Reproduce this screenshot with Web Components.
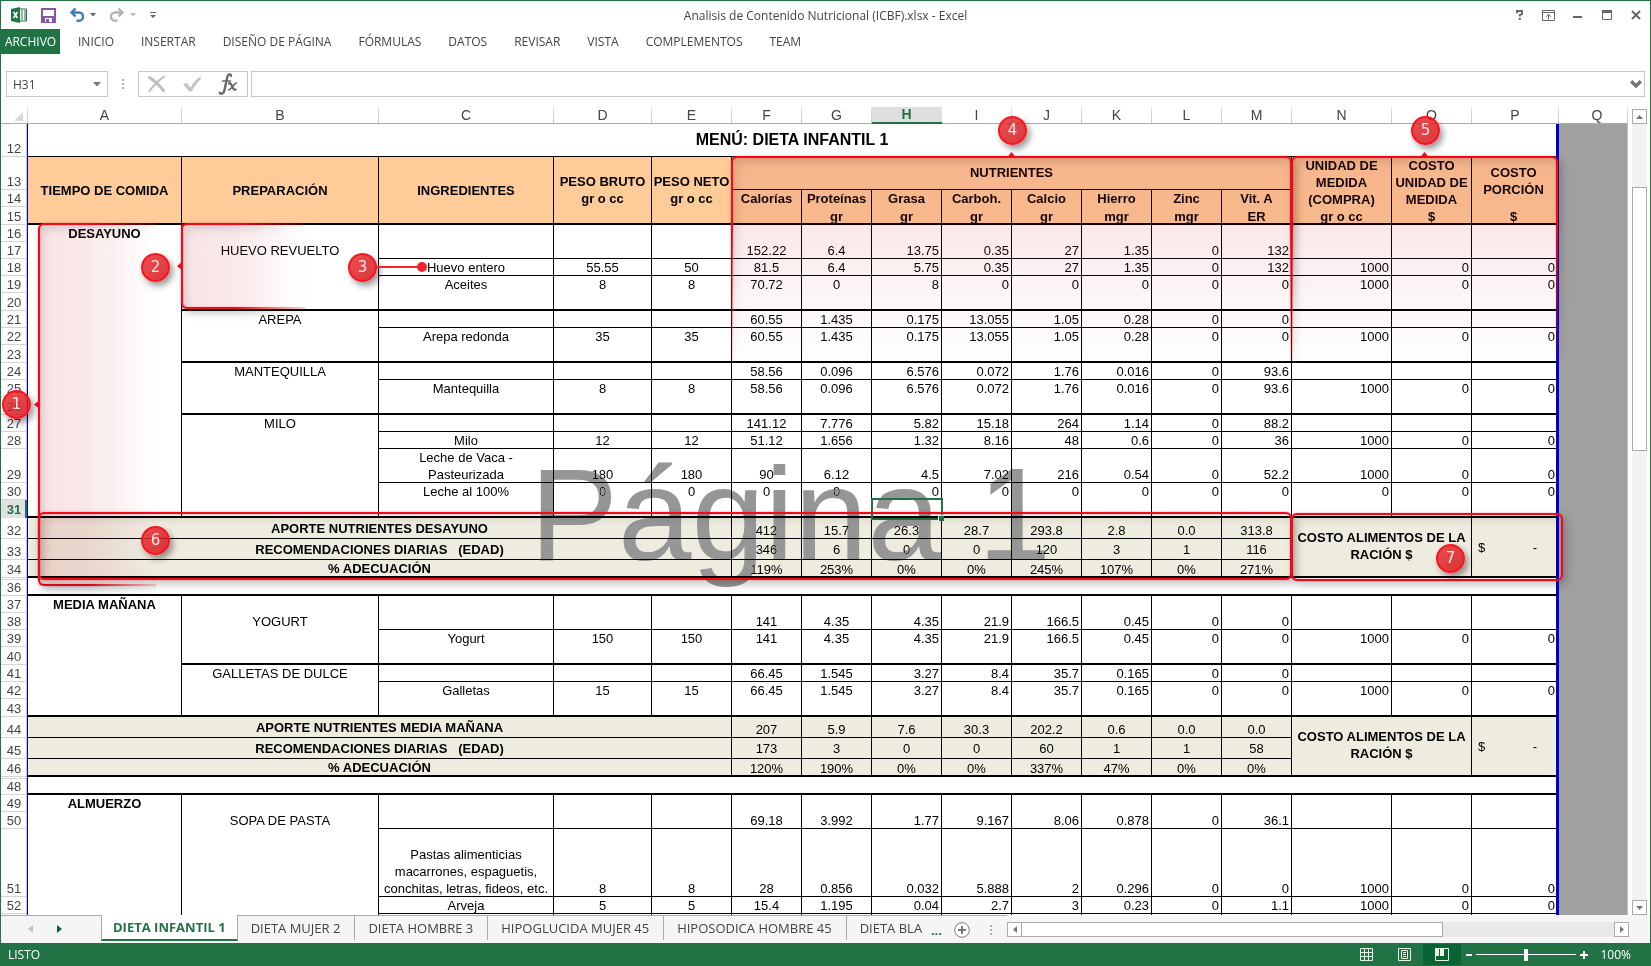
<!DOCTYPE html>
<html lang="es">
<head>
<meta charset="utf-8">
<title>Analisis de Contenido Nutricional (ICBF).xlsx - Excel</title>
<style>
html,body{height:100%}
body{margin:0;background:#fff;font-family:"Open Sans","Noto Sans",sans-serif;font-size:12px;color:#444;overflow:hidden}
</style>
</head>
<body>
<xl-app></xl-app>
<script>
const define = (name, html, setup) => {
  const tpl = document.createElement('template');
  tpl.innerHTML = '<style>*{box-sizing:border-box}button{font:inherit;color:inherit;background:none;border:0;padding:0;margin:0;display:flex;align-items:center;justify-content:center}svg{display:block}</style>' + html;
  customElements.define(name, class extends HTMLElement {
    constructor() {
      super();
      this.attachShadow({mode: 'open'}).append(tpl.content.cloneNode(true));
    }
    connectedCallback() { if (setup) setup(this, this.shadowRoot); }
  });
};

/* ---------- title bar ---------- */
define('xl-titlebar', `
<style>
:host{display:grid;grid-template-columns:1fr auto 1fr;height:28px;align-items:center}
.q{display:flex;gap:14px;align-items:center;padding-left:10px}
.split{gap:6px}
h1{margin:0;font:inherit;color:#444;white-space:nowrap}
.w{display:flex;justify-content:flex-end}
.w button{width:29px;height:28px}
</style>
<div class="q">
<svg width="16" height="16" viewBox="0 0 16 16" aria-hidden="true"><path d="M8.5 2h7v12h-7z" fill="#fff" stroke="#217346"/><path d="M10 4h2M13 4h2M10 6h2M13 6h2M10 8h2M13 8h2M10 10h2M13 10h2M10 12h2M13 12h2" stroke="#217346"/><path d="M0 2l9-2v16l-9-2z" fill="#217346"/><path d="M2.5 5l4 6M6.5 5l-4 6" stroke="#fff" stroke-width="1.6"/></svg>
<button aria-label="Guardar"><svg width="15" height="15" viewBox="0 0 15 15"><path d="M1 1h13v13H1z" fill="#fff" stroke="#8555ab" stroke-width="2"/><path d="M1 8h13v6H1z" fill="#8555ab"/><path d="M4 10h7v4H4z" fill="#fff"/><path d="M5 11h3v3H5z" fill="#8555ab"/></svg></button>
<button class="split" aria-label="Deshacer"><svg width="14" height="14" viewBox="0 0 14 14" fill="none" stroke="#3f7cbc" stroke-width="2.4"><path d="M5.500 0.500L1.500 4.500L5.500 8.500M1.500 4.500H9a4 4 0 0 1 0 8.200H6.500"/></svg><svg width="6" height="4" viewBox="0 0 6 4"><path d="M0 0h6L3 3.500z" fill="#666"/></svg></button>
<button class="split" aria-label="Rehacer"><svg width="14" height="14" viewBox="0 0 14 14" fill="none" stroke="#b4b4b4" stroke-width="2.4"><path d="M8.500 0.500L12.500 4.500L8.500 8.500M12.500 4.500H5a4 4 0 0 0 0 8.200H7.500"/></svg><svg width="6" height="4" viewBox="0 0 6 4"><path d="M0 0h6L3 3.500z" fill="#bbb"/></svg></button>
<button aria-label="Personalizar"><svg width="6" height="6" viewBox="0 0 6 6"><path d="M0 0h6v1H0zM0 3h6L3 6z" fill="#666"/></svg></button>
</div>
<h1>Analisis de Contenido Nutricional (ICBF).xlsx - Excel</h1>
<div class="w">
<button aria-label="Ayuda"><svg width="8" height="10" viewBox="0 0 8 10" fill="none" stroke="#666" stroke-width="2"><path d="M1 3.200V1h5v2.800L3.800 5v1.500M3.800 8v2"/></svg></button>
<button aria-label="Opciones de la cinta"><svg width="13" height="11" viewBox="0 0 13 11" fill="none" stroke="#666"><path d="M.5.5h12v10H.5zM.5 2.500h12M6.500 9.500V4.500M4 6.800l2.500-2.500 2.500 2.500"/></svg></button>
<button aria-label="Minimizar"><svg width="9" height="6" viewBox="0 0 9 6"><path d="M0 4h9v2H0z" fill="#666"/></svg></button>
<button aria-label="Maximizar"><svg width="10" height="10" viewBox="0 0 10 10"><path d="M.5 1.500h9v8h-9z" fill="none" stroke="#666"/><path d="M0 0h10v3H0z" fill="#666"/></svg></button>
<button aria-label="Cerrar"><svg width="10" height="10" viewBox="0 0 10 10"><path d="M1 1l8 8M9 1L1 9" stroke="#666" stroke-width="2"/></svg></button>
</div>`);

/* ---------- ribbon tabs ---------- */
define('xl-ribbon', `
<style>
:host{display:block}
nav{display:flex;height:25px;gap:27px}
button{white-space:nowrap}
.f{background:#217346;color:#fff;width:59px;margin-right:-9px}
</style>
<nav aria-label="Cinta"><button class="f">ARCHIVO</button><button>INICIO</button><button>INSERTAR</button><button>DISEÑO DE PÁGINA</button><button>FÓRMULAS</button><button>DATOS</button><button>REVISAR</button><button>VISTA</button><button>COMPLEMENTOS</button><button>TEAM</button></nav>`);

/* ---------- formula bar ---------- */
define('xl-formulabar', `
<style>
:host{display:flex;padding:17px 5px 10px}
.b{display:flex;align-items:center;height:26px;border:1px solid #c6c6c6;background:#fff}
input{font:inherit;color:#444;border:0;background:none;outline:0;padding:0;min-width:0}
.n{width:102px;padding:0 6px}
.n input{flex:1}
.d{width:30px;display:flex;align-items:center;justify-content:center}
.t{width:110px;margin-right:3px;justify-content:space-between;padding:0 9px}
.i{flex:1;padding:0 2px}
.i input{flex:1;height:24px}
</style>
<div class="b n"><input value="H31" aria-label="Cuadro de nombres"><button aria-label="Lista de nombres"><svg width="8" height="5" viewBox="0 0 8 5"><path d="M0 0h8L4 4.500z" fill="#777"/></svg></button></div>
<div class="d"><svg width="2" height="11" viewBox="0 0 2 11"><path d="M0 0h2v2H0zM0 4h2v2H0zM0 8h2v2H0z" fill="#b0b0b0"/></svg></div>
<div class="b t"><button aria-label="Cancelar"><svg width="18" height="18" viewBox="0 0 18 18" fill="none" stroke="#bdbdbd" stroke-linecap="round"><path d="M1.500 2.500C7 6 12 11 15.500 15.500" stroke-width="3"/><path d="M16 1.500C10 6 5 11 1.500 16" stroke-width="2"/></svg></button>
<button aria-label="Introducir"><svg width="20" height="18" viewBox="0 0 20 18"><path d="M1 9l4-1 3.500 4.500C11 8 14 4 18.500 1.500L19 4C15 7.500 12 12 9.500 16.500H7z" fill="#c4c4c4"/></svg></button>
<button aria-label="Insertar función"><svg width="20" height="22" viewBox="0 0 20 22" fill="none" stroke="#6a6a6a" stroke-linecap="round"><path d="M13 2.800C12.500 .5 9.800 .8 9.200 4.500L6.600 16.500C6 20.500 3.500 21.500 1.800 19.800" stroke-width="2.400"/><path d="M4.500 8h8" stroke-width="1.600"/><path d="M11 10.500c3-2 3 7.500 6.500 6" stroke-width="2.300"/><path d="M18.500 10c-2.500 0-5 6.800-8 6.800" stroke-width="1.600"/></svg></button></div>
<div class="b i"><input aria-label="Barra de fórmulas"><button aria-label="Expandir"><svg width="12" height="8" viewBox="0 0 12 8"><path d="M1.200 1.200L6 6l4.800-4.800" fill="none" stroke="#777" stroke-width="3.400"/></svg></button></div>`);

/* ---------- callouts laid over the sheet ---------- */
define('xl-callout', `
<style>
:host{display:block;position:absolute;box-sizing:border-box;padding:14px;pointer-events:none}
.m{position:absolute;inset:0;padding:14px}
.f{width:100%;height:100%;border:2px solid #f5081c;border-radius:6px;box-shadow:0 0 1px #f22,3px 4px 8px rgba(0,0,0,.24),inset 0 0 1px #f22,inset 4px 5px 8px rgba(0,0,0,.11)}
:host([fade=right]) .m{-webkit-mask:linear-gradient(to right,#000 45%,rgba(0,0,0,.2) calc(100% - 15px),transparent calc(100% - 14px));padding-right:0}
:host([fade=right]) .f{border-right:0;background:linear-gradient(to right,rgba(200,40,50,.12),rgba(200,40,50,.09) 60%,transparent)}
:host([fade=down]) .m{-webkit-mask:linear-gradient(#000 35%,rgba(0,0,0,.1) calc(100% - 15px),transparent calc(100% - 14px));padding-bottom:0}
:host([fade=down]) .f{border-bottom:0;border-bottom-left-radius:0;border-bottom-right-radius:0;background:linear-gradient(rgba(196,36,46,.13),rgba(200,40,50,.06))}
i{display:none;position:absolute;background:#f5081c}
:host([notch=left]) i{display:block;left:10px;top:50%;width:5px;height:8px;margin-top:-4px;clip-path:polygon(0 50%,100% 0,100% 100%)}
:host([notch=top]) i{display:block;top:10px;left:50%;height:5px;width:8px;margin-left:-4px;clip-path:polygon(50% 0,0 100%,100% 100%)}
</style><div class="m"><div class="f"></div></div><i></i>`, el => {
  const [x, y, w, h] = el.getAttribute('box').split(' ').map(Number);
  Object.assign(el.style, {left: x - 14 + 'px', top: y - 14 + 'px', width: w + 28 + 'px', height: h + 28 + 'px'});
});

define('xl-marker', `
<style>
:host{display:flex;position:absolute;width:29px;height:29px;box-sizing:border-box;align-items:center;justify-content:center;border:2px solid #fa1420;border-radius:50%;background:linear-gradient(135deg,rgba(230,46,46,.84),rgba(212,16,24,.84));color:#ffe6e6;font:15px/15px "DejaVu Sans",sans-serif;box-shadow:3px 4px 6px rgba(0,0,0,.4)}
i{display:none}
:host([tail]) i{display:block;position:absolute;left:27px;top:11px;width:45px;height:2px;background:#f5222c}
:host([tail]) i::after{content:"";position:absolute;right:-5px;top:-4px;width:10px;height:10px;border-radius:50%;background:#f5222c}
</style><slot></slot><i></i>`, el => {
  const [x, y] = el.getAttribute('at').split(' ').map(Number);
  Object.assign(el.style, {left: x - 14 + 'px', top: y - 14 + 'px'});
});

/* ---------- worksheet ---------- */
const row = (n, h, line, a, b, c, v) => {
  // line: 0 none, 1 thin from C, 2 thick from B, 3 thick across
  const cls = i => (i === 0 ? line === 3 : i === 1 ? line >= 2 : false) ? 'k' : i > 1 ? ['', 't', 'k', 'k'][line] : '';
  const vals = (v || '').split(' ');
  let s = `<tr style="height:${h}px">${num(n)}<td class="${cls(0)} b">${a || ''}</td><td class="${cls(1)}">${b || ''}</td><td class="${cls(2)}">${c || ''}</td>`;
  for (let i = 0; i < 13; i++) {
    const al = i > 3 ? ' r' : '', p = i === 12 ? ' p' : '', sel = n === 31 && i === 4 ? ' sel' : '';
    const t = vals[i] && vals[i] !== '_' ? vals[i] : '';
    s += `<td class="${cls(i + 3)}${al}${p}${sel}">${t}</td>`;
  }
  return s + '</tr>';
};
const num = n => `<th scope="row" class="n${n === 31 ? ' on' : ''}">${n || ''}</th>`;
const sums = (n, name, r) => ['APORTE NUTRIENTES ' + name, 'RECOMENDACIONES DIARIAS &nbsp; (EDAD)', '% ADECUACIÓN'].map((t, i) => {
  const k = i === 2 ? 'k' : 't';
  let s = `<tr class="s${i ? '' : ' s1'}" style="height:${i === 2 ? 18 : 21}px">${num(n + i)}<td colspan="5" class="b ${k}">${t}</td>`;
  s += r[i].split(' ').map(v => `<td class="${k}">${v}</td>`).join('');
  if (!i) s += '<td colspan="2" rowspan="3" class="b k c">COSTO ALIMENTOS DE LA<br>RACIÓN $</td><td rowspan="3" class="k p"><div class="m"><span>$</span><span>-</span></div></td>';
  return s + '</tr>';
}).join('') + '<tr style="height:2px" class="z"><th class="n"></th><td colspan="16" class="p x"></td></tr>';
const gap = n => `<tr style="height:16px">${num(n)}<td colspan="16" class="p k x"></td></tr>`;
const nut = ['Calorías', 'Proteínas', 'Grasa', 'Carboh.', 'Calcio', 'Hierro', 'Zinc', 'Vit. A'];
const unit = ['', 'gr', 'gr', 'gr', 'gr', 'mgr', 'mgr', 'ER'];
const letters = 'ABCDEFGHIJKLMNOPQ'.split('');
const widths = [27, 154, 197, 175, 98, 80, 70, 70, 70, 70, 70, 70, 70, 70, 100, 80, 87];

define('xl-sheet', `
<style>
:host{display:flex;flex:1;min-height:0}
.g{flex:1;min-width:0;overflow:hidden;position:relative}
table{width:100%;table-layout:fixed;border-collapse:separate;border-spacing:0;font:13px/17px "Liberation Sans",Arial,sans-serif;color:#000}
td,th{padding:0 1px 0 0;text-align:center;vertical-align:bottom;font-weight:400;white-space:nowrap}
td{box-shadow:inset -1px 0 #000}
.t{box-shadow:inset -1px 0 #000,inset 0 -1px #000}
.k{box-shadow:inset -1px 0 #000,inset 0 -2px #000}
.p{border-right:3px solid #0000cd;box-shadow:none}
.p.t{box-shadow:inset 0 -1px #000}
.p.k{box-shadow:inset 0 -2px #000}
.b{font-weight:700}
td.r{text-align:right;padding-right:3px}
td.r.p{padding-right:1px}
thead th{height:17px;font-size:14px;line-height:16px;color:#444;border-bottom:1px solid #ababab;background:linear-gradient(#e4e4e4,#c8c8c8) right/1px 100% no-repeat}
thead th.on{background:#dfdfdf;color:#217346;font-weight:700;border-bottom:2px solid #217346;line-height:15px}
thead th:last-child{padding-left:8px}
thead svg{margin:0 4px 2px auto}
.n{line-height:16px;color:#444;border-right:1px solid #0000cd;box-shadow:inset -1px 0 #c8c8c8,inset 0 -1px #d4d4d4;padding:0}
.n.on{background:#e1e1e1;color:#217346;font-weight:700;box-shadow:inset -2px 0 #217346}
.title{font-size:16px;font-weight:700;vertical-align:middle;padding:0 0 2px}
.h td{background:#fecb99;font-weight:700}
.h .v{vertical-align:middle}
.h .u{padding-bottom:2px}
.s td{background:#eeebdf;vertical-align:middle}
.s .b{padding-bottom:1px}
.s .c{padding-bottom:4px}
.s1 td.t:not(.b){vertical-align:bottom}
.z th{font-size:0;line-height:0}
.q{background:#a0a0a0;box-shadow:none;border-right:1px solid #c0c0c0}
.m{display:flex;justify-content:space-between;padding:0 18px 2px 6px}
.sel{position:relative}
.sel::before{content:"";position:absolute;inset:-2px -1px -2px -1px;border:2px solid #217346}
.sel::after{content:"";position:absolute;right:-2px;bottom:-3px;width:5px;height:5px;background:#217346;border:1px solid #fff;border-right:0;border-bottom:0}
.wm{position:absolute;top:332px;left:24px;width:1531px;text-align:center;font:132px/152px "Liberation Sans",Arial,sans-serif;color:#969696;mix-blend-mode:darken;pointer-events:none}
.sb{width:15px;margin:2px 3px 0 4px;display:flex;flex-direction:column;background:#f2f2f2}
.sb button{height:15px;background:#fff;border:1px solid #ababab}
.sb .th{margin-top:63px;height:264px;background:#fff;border:1px solid #ababab}
.sb button:last-child{margin-top:auto}
</style>
<div class="g"><table aria-label="Hoja"><colgroup>${widths.map(w => `<col style="width:${w}px">`).join('')}<col></colgroup>
<thead><tr><th><svg width="9" height="9" viewBox="0 0 9 9" aria-hidden="true"><path d="M9 0v9H0z" fill="#dadada"/></svg></th>${letters.map(l => `<th scope="col"${l === 'H' ? ' class="on"' : ''}>${l}</th>`).join('')}</tr></thead>
<tbody>
<tr style="height:33px">${num(12)}<td colspan="16" class="title p t">MENÚ: DIETA INFANTIL 1</td><td class="q" rowspan="43"></td></tr>
<tr class="h" style="height:33px">${num(13)}<td rowspan="3" class="v k u">TIEMPO DE COMIDA</td><td rowspan="3" class="v k u">PREPARACIÓN</td><td rowspan="3" class="v k u">INGREDIENTES</td><td rowspan="3" class="v k u">PESO BRUTO<br>gr o cc</td><td rowspan="3" class="v k u">PESO NETO<br>gr o cc</td><td colspan="8" class="v t u">NUTRIENTES</td><td rowspan="3" class="v k">UNIDAD DE<br>MEDIDA<br>(COMPRA)<br>gr o cc</td><td rowspan="3" class="v k">COSTO<br>UNIDAD DE<br>MEDIDA<br>$</td><td rowspan="2" class="v p u">COSTO<br>PORCIÓN</td></tr>
<tr class="h" style="height:17px">${num(14)}${nut.map(t => `<td>${t}</td>`).join('')}</tr>
<tr class="h" style="height:18px">${num(15)}${unit.map(t => `<td class="k">${t}</td>`).join('')}<td class="p k">$</td></tr>
${[
row(16, 17, 0, 'DESAYUNO'),
row(17, 17, 1, '', 'HUEVO REVUELTO', '', '_ _ 152.22 6.4 13.75 0.35 27 1.35 0 132'),
row(18, 17, 1, '', '', 'Huevo entero', '55.55 50 81.5 6.4 5.75 0.35 27 1.35 0 132 1000 0 0'),
row(19, 17, 0, '', '', 'Aceites', '8 8 70.72 0 8 0 0 0 0 0 1000 0 0'),
row(20, 18, 2),
row(21, 17, 1, '', 'AREPA', '', '_ _ 60.55 1.435 0.175 13.055 1.05 0.28 0 0'),
row(22, 17, 0, '', '', 'Arepa redonda', '35 35 60.55 1.435 0.175 13.055 1.05 0.28 0 0 1000 0 0'),
row(23, 18, 2),
row(24, 17, 1, '', 'MANTEQUILLA', '', '_ _ 58.56 0.096 6.576 0.072 1.76 0.016 0 93.6'),
row(25, 17, 0, '', '', 'Mantequilla', '8 8 58.56 0.096 6.576 0.072 1.76 0.016 0 93.6 1000 0 0'),
row(26, 18, 2),
row(27, 17, 1, '', 'MILO', '', '_ _ 141.12 7.776 5.82 15.18 264 1.14 0 88.2'),
row(28, 17, 1, '', '', 'Milo', '12 12 51.12 1.656 1.32 8.16 48 0.6 0 36 1000 0 0'),
row(29, 34, 1, '', '', 'Leche de Vaca -<br>Pasteurizada', '180 180 90 6.12 4.5 7.02 216 0.54 0 52.2 1000 0 0'),
row(30, 17, 0, '', '', 'Leche al 100%', '0 0 0 0 0 0 0 0 0 0 0 0 0'),
row(31, 18, 3),
sums(32, 'DESAYUNO', ['412 15.7 26.3 28.7 293.8 2.8 0.0 313.8', '346 6 0 0 120 3 1 116', '119% 253% 0% 0% 245% 107% 0% 271%']),
gap(36),
row(37, 17, 0, 'MEDIA MAÑANA'),
row(38, 17, 1, '', 'YOGURT', '', '_ _ 141 4.35 4.35 21.9 166.5 0.45 0 0'),
row(39, 17, 0, '', '', 'Yogurt', '150 150 141 4.35 4.35 21.9 166.5 0.45 0 0 1000 0 0'),
row(40, 18, 2),
row(41, 17, 1, '', 'GALLETAS DE DULCE', '', '_ _ 66.45 1.545 3.27 8.4 35.7 0.165 0 0'),
row(42, 17, 0, '', '', 'Galletas', '15 15 66.45 1.545 3.27 8.4 35.7 0.165 0 0 1000 0 0'),
row(43, 18, 3),
sums(44, 'MEDIA MAÑANA', ['207 5.9 7.6 30.3 202.2 0.6 0.0 0.0', '173 3 0 0 60 1 1 58', '120% 190% 0% 0% 337% 47% 0% 0%']),
gap(48),
row(49, 17, 0, 'ALMUERZO'),
row(50, 17, 1, '', 'SOPA DE PASTA', '', '_ _ 69.18 3.992 1.77 9.167 8.06 0.878 0 36.1'),
row(51, 68, 1, '', '', 'Pastas alimenticias<br>macarrones, espaguetis,<br>conchitas, letras, fideos, etc.', '8 8 28 0.856 0.032 5.888 2 0.296 0 0 1000 0 0'),
row(52, 17, 1, '', '', 'Arveja', '5 5 15.4 1.195 0.04 2.7 3 0.23 0 1.1 1000 0 0'),
row('', 17, 0)
].join('')}
</tbody></table>
<div class="wm">Página 1</div>
<slot></slot></div>
<div class="sb"><button aria-label="Subir"><svg width="7" height="4" viewBox="0 0 7 4"><path d="M0 4h7L3.500 0z" fill="#777"/></svg></button><div class="th"></div><button aria-label="Bajar"><svg width="7" height="4" viewBox="0 0 7 4"><path d="M0 0h7L3.500 4z" fill="#777"/></svg></button></div>`);

/* ---------- sheet tabs and horizontal scroll ---------- */
define('xl-tabs', `
<style>
:host{display:flex;height:28px;background:#f5f5f5;padding-right:21px;font-size:13px}
.l{flex:1006 1 0;min-width:0;display:flex;border-top:1px solid #ababab}
.nav{display:flex;width:100px;padding-left:15px;flex:none;height:25px}
.nav button{width:29px}
.tab{flex:none;height:24px;padding:0 14px 0 13px;white-space:nowrap;border-right:1px solid #ababab}
.cur{background:#fff;color:#217346;font-weight:700;height:26px;margin-top:-1px;padding:0 11px;border-left:1px solid #ababab;border-bottom:2px solid #217346}
.last{border:0;padding-right:0}
.e{color:#217346;font-weight:700;margin:0 12px 0 auto}
.add{margin-right:20px}
.dots{align-self:center;margin-right:15px}
.hs{flex:622 1 0;min-width:0;display:flex;height:15px;margin-top:7px;background:#e9e9e9}
.hs button{width:15px;border:1px solid #ababab;background:#fff;flex:none}
.th{flex:421;border:1px solid #ababab;border-left:0;background:#fff}
.rest{flex:171}
</style>
<div class="l"><div class="nav"><button aria-label="Hoja anterior"><svg width="5" height="8" viewBox="0 0 5 8"><path d="M5 0v8L0 4z" fill="#c4c4c4"/></svg></button><button aria-label="Hoja siguiente"><svg width="5" height="8" viewBox="0 0 5 8"><path d="M0 0v8l5-4z" fill="#0e6236"/></svg></button></div>
<button class="tab cur">DIETA INFANTIL 1</button><button class="tab">DIETA MUJER 2</button><button class="tab">DIETA HOMBRE 3</button><button class="tab">HIPOGLUCIDA MUJER 45</button><button class="tab">HIPOSODICA HOMBRE 45</button><button class="tab last">DIETA BLA</button>
<button class="e" aria-label="Más hojas">...</button>
<button class="add" aria-label="Hoja nueva"><svg width="16" height="16" viewBox="0 0 16 16" fill="none" stroke="#777"><circle cx="8" cy="8" r="7.300" fill="#fff"/><path d="M8 4v8M4 8h8" stroke-width="2"/></svg></button>
<svg class="dots" width="2" height="10" viewBox="0 0 2 10"><path d="M0 0h2v2H0zM0 4h2v2H0zM0 8h2v2H0z" fill="#b0b0b0"/></svg></div>
<div class="hs"><button aria-label="Izquierda"><svg width="4" height="7" viewBox="0 0 4 7"><path d="M4 0v7L0 3.500z" fill="#777"/></svg></button><div class="th"></div><div class="rest"></div><button aria-label="Derecha"><svg width="4" height="7" viewBox="0 0 4 7"><path d="M0 0v7l4-3.500z" fill="#777"/></svg></button></div>`);

/* ---------- status bar ---------- */
define('xl-status', `
<style>
:host{display:flex;height:23px;background:#217346;color:#fff;align-items:center;padding:0 19px 0 7px}
.s{margin-right:auto}
.v{width:38px;height:21px}
.v.on{background:#0a6332}
.z{width:15px;height:21px}
input{-webkit-appearance:none;appearance:none;background:linear-gradient(#fff,#fff) center/100% 1px no-repeat;width:100px;height:12px;margin:0}
input::-webkit-slider-thumb{-webkit-appearance:none;width:4px;height:12px;background:#fff}
.p{width:40px;text-align:right}
</style>
<span class="s">LISTO</span>
<button class="v" aria-label="Normal"><svg width="13" height="13" viewBox="0 0 13 13" fill="none" stroke="#e6f2ea"><path d="M.5.5h12v12H.5zM4.500.5v12M8.500.5v12M.5 4.500h12M.5 8.500h12"/></svg></button>
<button class="v" aria-label="Diseño de página"><svg width="13" height="13" viewBox="0 0 13 13" fill="none" stroke="#e6f2ea"><path d="M.5.5h12v12H.5zM3.500 2.500h6v8h-6zM5 4.500h3M5 6.500h3M5 8.500h3"/></svg></button>
<button class="v on" aria-label="Ver salto de página"><svg width="14" height="13" viewBox="0 0 14 13"><path d="M.5.5h13v12H.5z" fill="none" stroke="#e6f2ea"/><path d="M0 0h4v8H0zM5 0h4v8H5z" fill="#e6f2ea"/></svg></button>
<button class="z" aria-label="Alejar"><svg width="6" height="2" viewBox="0 0 6 2"><path d="M0 0h6v2H0z" fill="#fff"/></svg></button>
<input type="range" min="0" max="100" value="50" aria-label="Zoom">
<button class="z" aria-label="Acercar"><svg width="8" height="8" viewBox="0 0 8 8"><path d="M3 0h2v3h3v2H5v3H3V5H0V3h3z" fill="#fff"/></svg></button>
<span class="p">100%</span>`);

/* ---------- application window ---------- */
define('xl-app', `
<style>
:host{display:flex;flex-direction:column;height:100vh;position:relative;padding:1px 1px 0;box-sizing:border-box}
:host::after{content:"";position:absolute;inset:0;border:1px solid #217346;pointer-events:none}
</style>
<xl-titlebar></xl-titlebar><xl-ribbon></xl-ribbon><xl-formulabar></xl-formulabar>
<xl-sheet>
<xl-callout box="37 116 119 363" fade="right" notch="left"></xl-callout>
<xl-callout box="180 116 125 86" fade="right" notch="left"></xl-callout>
<xl-callout box="730 49 561 205" fade="down" notch="top"></xl-callout>
<xl-callout box="1290 49 267 205" fade="down" notch="top"></xl-callout>
<xl-callout box="37 405 1254 68"></xl-callout>
<xl-callout box="1290 406 272 68"></xl-callout>
<xl-marker at="15 297">1</xl-marker>
<xl-marker at="154 160">2</xl-marker>
<xl-marker at="361 160" tail>3</xl-marker>
<xl-marker at="1011 23">4</xl-marker>
<xl-marker at="1424 23">5</xl-marker>
<xl-marker at="154 433">6</xl-marker>
<xl-marker at="1449 451">7</xl-marker>
</xl-sheet>
<xl-tabs></xl-tabs><xl-status></xl-status>`);
</script>
</body>
</html>
